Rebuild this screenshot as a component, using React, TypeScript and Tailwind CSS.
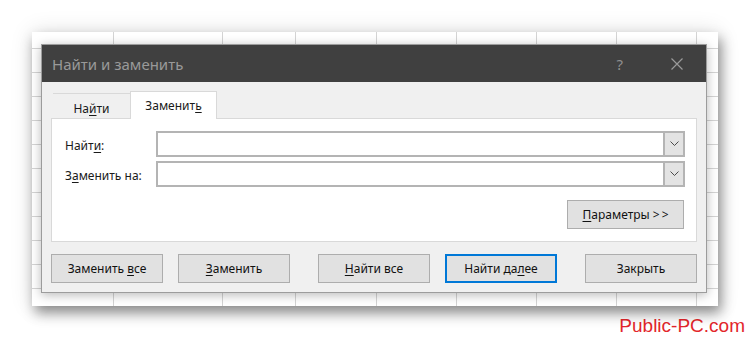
import React from 'react';

const colWidths = [
  'w-[82px]',
  'w-[109px]',
  'w-[73px]',
  'w-[81px]',
  'w-[80px]',
  'w-[80px]',
  'w-[80px]',
  'w-[80px]',
  'w-[21px]',
];

const SheetRow: React.FC<{ first?: boolean }> = ({ first }) => (
  <div className={`flex shrink-0 border-b border-[#d4d4d4] ${first ? 'h-[17px]' : 'h-[24px]'}`}>
    {colWidths.map((w, i) => (
      <div key={i} className={`${w} shrink-0 h-full ${i < colWidths.length - 1 ? 'border-r border-[#d4d4d4]' : ''}`} />
    ))}
  </div>
);

const Chevron: React.FC = () => (
  <svg width="9" height="6" viewBox="0 0 9 6">
    <polyline points="0.5,0.5 4.5,4.5 8.5,0.5" fill="none" stroke="#4a4a4a" strokeWidth="1" />
  </svg>
);

const ComboInput: React.FC = () => (
  <div className="flex-1 h-[26px] flex border-2 border-[#b4b4b4] bg-white">
    <div className="flex-1" />
    <div className="w-[20px] h-full border-l-2 border-[#b4b4b4] bg-[#e3e3e3] flex items-center justify-center">
      <Chevron />
    </div>
  </div>
);

const Btn: React.FC<{ className?: string; focused?: boolean; children: React.ReactNode }> = ({ className = '', focused, children }) => (
  <button
    className={`w-[112px] h-[29px] shrink-0 bg-[#e1e1e1] text-[12px] leading-[16px] text-[#111] flex items-center justify-center ${
      focused ? 'border-2 border-[#0078d7]' : 'border border-[#adadad]'
    } ${className}`}
  >
    {children}
  </button>
);

const U: React.FC<{ children: React.ReactNode }> = ({ children }) => (
  <span className="underline underline-offset-[2px]">{children}</span>
);

export default function App() {
  return (
    <div className="w-[750px] h-[338px] bg-white overflow-hidden font-['Noto_Sans',sans-serif]">
      {/* excel sheet behind */}
      <div className="relative ml-[32px] mt-[32px] w-[686px] h-[274px] bg-white shadow-[3px_7px_12px_rgba(0,0,0,0.42),0_0_22px_rgba(0,0,0,0.12)]">
        <div className="w-full h-full overflow-hidden flex flex-col">
          <SheetRow first />
          {Array.from({ length: 11 }).map((_, i) => (
            <SheetRow key={i} />
          ))}
        </div>

        {/* dialog */}
        <div className="absolute left-[9px] top-[12px] w-[666px] h-[249px] border border-[#9c9c9c] bg-[#f0f0f0] flex flex-col shadow-[0_2px_10px_rgba(0,0,0,0.28)]">
          <div className="h-[37px] shrink-0 bg-[#404040] flex items-center justify-between pl-[10px] pr-[23px]">
            <span className="text-[15px] text-[#999999] leading-[20px]">Найти и заменить</span>
            <div className="flex items-center gap-[48px] text-[#8f8f8f]">
              <span className="text-[15px] leading-[20px]">?</span>
              <svg width="12" height="12" viewBox="0 0 12 12">
                <path d="M0.5 0.5 L11.5 11.5 M11.5 0.5 L0.5 11.5" stroke="#9a9a9a" strokeWidth="1.2" fill="none" />
              </svg>
            </div>
          </div>

          <div className="flex-1 px-[9px] pt-[9px] flex flex-col">
            {/* tabs */}
            <div className="flex items-end pl-[2px]">
              <div className="w-[77px] h-[25px] border-t border-[#d9d9d9] flex justify-center pt-[7px] text-[12px] leading-[16px] text-[#1a1a1a]">
                На<U>й</U>ти
              </div>
              <div className="relative z-10 w-[87px] h-[28px] -mb-px bg-white border border-b-0 border-[#d9d9d9] flex justify-center pt-[6px] text-[12px] leading-[16px] text-[#1a1a1a]">
                Замени<span>т</span>
                <U>ь</U>
              </div>
            </div>

            {/* panel */}
            <div className="h-[124px] shrink-0 bg-white border border-[#d9d9d9] pt-[12px] pl-[13px] pr-[11px] flex flex-col">
              <div className="flex items-center">
                <span className="w-[91px] mt-[4px] text-[12px] leading-[16px] text-[#1a1a1a]">
                  Найт<U>и</U>:
                </span>
                <ComboInput />
              </div>
              <div className="flex items-center mt-[4px]">
                <span className="w-[91px] mt-[4px] text-[12px] leading-[16px] text-[#1a1a1a]">
                  З<U>а</U>менить на:
                </span>
                <ComboInput />
              </div>
              <div className="flex justify-end mt-[13px] mr-[1px]">
                <Btn className="w-[117px]">
                  <span>
                    <U>П</U>араметры &gt;<span className="ml-[2px]">&gt;</span>
                  </span>
                </Btn>
              </div>
            </div>

            {/* bottom buttons */}
            <div className="flex mt-[12px]">
              <Btn>
                <span>
                  Заменить <U>в</U>се
                </span>
              </Btn>
              <Btn className="ml-[15px]">
                <span>
                  <U>З</U>аменить
                </span>
              </Btn>
              <Btn className="ml-[28px]">
                <span>
                  <U>Н</U>айти все
                </span>
              </Btn>
              <Btn className="ml-[15px]" focused>
                <span>
                  Найти да<U>л</U>ее
                </span>
              </Btn>
              <Btn className="ml-[28px]">Закрыть</Btn>
            </div>
          </div>
        </div>
      </div>

      {/* watermark */}
      <div className="flex justify-end pr-[5px] mt-[9px]">
        <span className="font-['Liberation_Sans',Arial,sans-serif] text-[19px] leading-[22px] text-[#e3262b]">Public-PC.com</span>
      </div>
    </div>
  );
}
